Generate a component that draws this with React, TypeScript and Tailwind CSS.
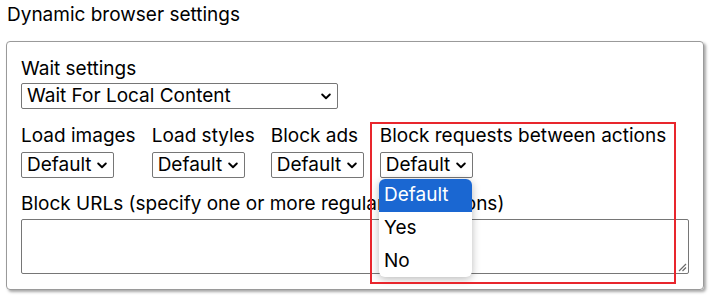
interface FakeSelectProps {
	value: string;
	width: string;
}

function Chevron() {
	return (
		<svg width="10" height="7" viewBox="0 0 10 7" className="shrink-0">
			<path d="M1.2 1.5 L5 5.2 L8.8 1.5" stroke="#000" strokeWidth="1.9" fill="none" strokeLinecap="round" strokeLinejoin="round" />
		</svg>
	);
}

function FakeSelect({ value, width }: FakeSelectProps) {
	return (
		<div className={`flex h-[26px] items-center justify-between rounded-[2px] border border-[#767676] bg-white pl-[5px] pr-[6px] ${width}`}>
			<span className="leading-[22px] whitespace-nowrap">{value}</span>
			<Chevron />
		</div>
	);
}

const columns = ['Load images', 'Load styles', 'Block ads', 'Block requests between actions'];

export default function App() {
	return (
		<div className="relative h-[298px] w-[712px] overflow-hidden bg-white text-[19px] text-black" style={{ fontFamily: 'Inter, "Noto Sans", sans-serif' }}>
			<div className="pl-[7px] pt-[4px] leading-[22px]">Dynamic browser settings</div>

			<div className="ml-[6px] mt-[15px] h-[249px] w-[698px] rounded-[4px] border border-[#9a9a9a] px-[14px] pt-[16px] shadow-[2px_2px_3px_rgba(0,0,0,0.35)]">
				<div className="leading-[22px]">Wait settings</div>
				<div className="mt-[3px]">
					<FakeSelect value="Wait For Local Content" width="w-[317px]" />
				</div>

				<div className="mt-[16px] flex gap-[16px]">
					{columns.map((label) => (
						<div key={label} className="flex flex-col items-start">
							<div className="leading-[22px] whitespace-nowrap">{label}</div>
							<div className="mt-[5px]">
								<FakeSelect value="Default" width="w-[93px]" />
							</div>
						</div>
					))}
				</div>

				<div className="mt-[15px] leading-[22px]">Block URLs (specify one or more regular expressions)</div>
				<div className="relative mt-[4px] h-[55px] w-full rounded-[2px] border border-[#767676] bg-white">
					<svg className="absolute bottom-[1px] right-[1px]" width="9" height="9" viewBox="0 0 9 9">
						<path d="M1 8 L8 1 M4.5 8 L8 4.5" stroke="#6b6b6b" strokeWidth="1.2" fill="none" />
					</svg>
				</div>
			</div>

			{/* open dropdown for the last select */}
			<div className="absolute left-[379px] top-[179px] h-[98px] w-[93px] overflow-hidden rounded-[6px] bg-white shadow-[0_2px_8px_rgba(0,0,0,0.28)]">
				<div className="flex h-[33px] items-center bg-[#1a67d2] pl-[5px] text-white">Default</div>
				<div className="flex h-[33px] items-center pl-[5px]">Yes</div>
				<div className="flex h-[32px] items-center pl-[5px]">No</div>
			</div>

			{/* highlight annotation */}
			<div className="pointer-events-none absolute left-[370px] top-[122px] h-[162px] w-[306px] border-2 border-[#e8262d]" />
		</div>
	);
}
